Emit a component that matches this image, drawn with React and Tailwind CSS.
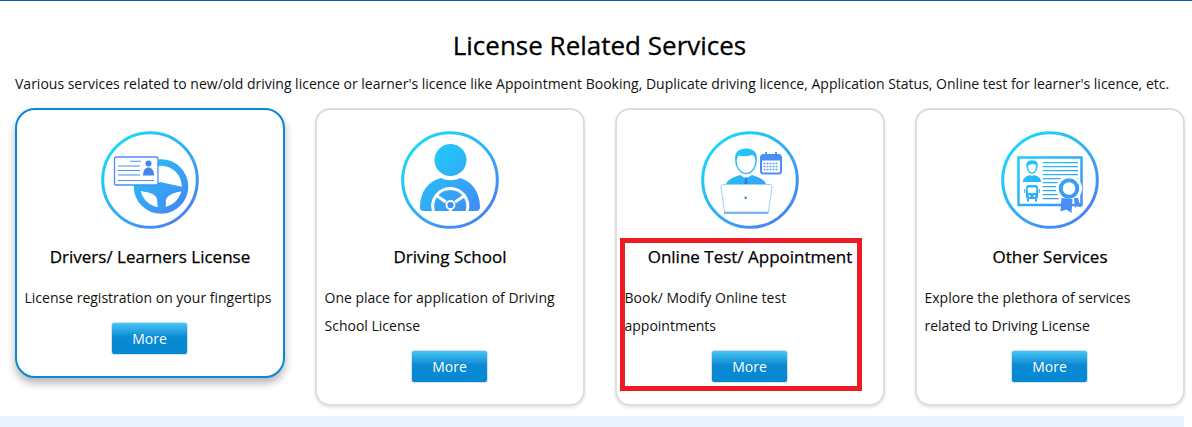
import React from 'react';

// circle + gradient shared by all four service icons
function IconRing({ id, children }) {
  return (
    <svg width="98" height="98" viewBox="0 0 98 98" className="block">
      <defs>
        <linearGradient id={id} gradientUnits="userSpaceOnUse" x1="14" y1="8" x2="86" y2="90">
          <stop offset="0" stopColor="#16dcf8" />
          <stop offset="1" stopColor="#4a7ff5" />
        </linearGradient>
      </defs>
      <circle cx="49" cy="49" r="47.3" fill="none" stroke={`url(#${id})`} strokeWidth="3" />
      {children(`url(#${id})`)}
    </svg>
  );
}

function LicenseIcon() {
  return (
    <IconRing id="g1">
      {(g) => (
        <>
          <circle cx="60" cy="55.500" r="24" fill="none" stroke={g} strokeWidth="6.500" />
          <path d="M37 54 H52 L59 51 L82 56 L82 60 Q68 62 65 68 L64.500 80 H57 L56 68 Q54 61 37 60 Z" fill={g} />
          <rect x="13.500" y="26" width="43.500" height="28" rx="2" fill="#fff" stroke="#4a8df5" strokeWidth="1.300" />
          <path d="M29 30.300h11M17 35h22M17 39.500h22M17 44h22M17 49.500h36" fill="none" stroke="#4a8df5" strokeWidth="1.100" />
          <circle cx="47.500" cy="32.500" r="3" fill="#3f86ee" />
          <path d="M42 44.500 c0-6 3-8 5.500-8 s5.500 2 5.500 8z" fill="#3f86ee" />
        </>
      )}
    </IconRing>
  );
}

function SchoolIcon() {
  return (
    <IconRing id="g2">
      {(g) => (
        <>
          <circle cx="49.500" cy="29" r="16" fill={g} />
          <path d="M19 76 C19 60 28 50 40 47 C45 50 54 50 59 47 C70 50 79 60 79 76 C79 79 77 80 75 80 H23 C20 80 19 79 19 76 Z" fill={g} />
          <path d="M32.500 80 A17.500 17.500 0 1 1 66 80" fill="none" stroke="#fff" strokeWidth="3" />
          <path d="M36 65 L45 71 M63 65 L54 71 M49.500 78 V82" fill="none" stroke="#fff" strokeWidth="3" />
          <path d="M30 81 H69 V84 H30 Z" fill="#fff" />
          <circle cx="49.500" cy="74" r="4" fill="#3f8ef2" stroke="#fff" strokeWidth="1.800" />
        </>
      )}
    </IconRing>
  );
}

function OnlineIcon() {
  return (
    <IconRing id="g3">
      {(g) => (
        <>
          <path d="M25 53 C27 48 33 46 39 44 L44 47 L46 47 L51 44 C57 46 63 48 65 53 Z" fill={g} />
          <path d="M43.300 46.500 H46.700 L46 48.500 L47 53 H43 L44 48.500 Z" fill="#2f7fe0" />
          <path d="M35 30 C35 37 40 42.500 45 42.500 C50 42.500 55 37 55 30 C55 23 51 21 45 21 C39 21 35 23 35 30 Z" fill="#fff" stroke={g} strokeWidth="1.300" />
          <path d="M34.500 31 C32.500 21 38 17.500 45 17.500 C52 17.500 57.500 21 55.500 31 C54.500 26 53 24.500 51 24 C46 25.500 41 25.500 38 24.500 C36 26 35.500 28 34.500 31 Z" fill={g} />
          <rect x="60" y="24" width="20" height="18.500" rx="2.500" fill="#fff" stroke="#4a8df5" strokeWidth="2" />
          <rect x="60" y="24" width="20" height="5.500" rx="1.500" fill="#4a8df5" />
          <path d="M65 21v5M75 21v5" fill="none" stroke="#4a8df5" strokeWidth="1.800" />
          <path d="M62.500 32.500h15M62.500 35.500h15M62.500 38.500h15" fill="none" stroke="#6a9ff5" strokeWidth="1.500" strokeDasharray="2 1" />
          <path d="M22 53.500 H69 C70.500 53.500 71.200 54.500 71 56 L67.500 81 H23.500 L20 56 C19.800 54.500 20.500 53.500 22 53.500 Z" fill="#fff" stroke="#8ecdf6" strokeWidth="0.900" />
          <circle cx="44.700" cy="66.700" r="1.300" fill="#2f8eec" />
          <path d="M23 82 H67.500" fill="none" stroke="#5d9ef4" strokeWidth="1.300" />
        </>
      )}
    </IconRing>
  );
}

function OtherIcon() {
  return (
    <IconRing id="g4">
      {(g) => (
        <>
          <path d="M17.500 26.500 H80.500 V74 H17.500 Z" fill="none" stroke={g} strokeWidth="2.500" />
          <path d="M41.700 31.700h35.300M41.700 35.700h35.300M41.700 39.700h35.300M41.700 43.700h35.300M41.700 47.700h35.300M41.700 51.700h24M41.700 55.700h16M41.700 59.700h16M41.700 63.700h16M41.700 67.700h16" fill="none" stroke={g} strokeWidth="1.200" />
          <path d="M26.500 37 C25 32 27 30 31 30 C35 30 37 32 35.500 37 C35 40 33.500 42 31 42 C28.500 42 27 40 26.500 37 Z" fill="#fff" stroke={g} strokeWidth="1.500" />
          <path d="M26 36 C24.500 31.500 27 30 31 30 C35 30 37.500 31.500 36 36 C35 33 32 32.500 30 33.500 C28 34 27 34 26 36 Z" fill={g} />
          <path d="M22 51 C22 47 25 45 29 44 C30 45.500 32 45.500 33 44 C37 45 40 47 40 51 Z" fill={g} />
          <rect x="25" y="54" width="12" height="14" rx="2.500" fill={g} />
          <path d="M26.800 56.500h8.400v5.500h-8.400Z" fill="#fff" />
          <path d="M27 68v2.500M35 68v2.500" fill="none" stroke={g} strokeWidth="2" />
          <path d="M23.800 58v4M38.200 58v4" fill="none" stroke={g} strokeWidth="1.200" />
          <circle cx="28.500" cy="65" r="1" fill="#fff" />
          <circle cx="33.500" cy="65" r="1" fill="#fff" />
          <circle cx="68" cy="57.500" r="13" fill="#fff" />
          <path d="M60.500 67 L71.500 68 L70.500 82 L65.500 78.500 L59.500 80.500 Z" fill="#4a8df5" />
          <path d="M73 67 L77 67 L80 76.500 L76 75 L74 77 Z" fill="#4a8df5" />
          <circle cx="68" cy="57.500" r="8.300" fill="#fff" stroke={g} strokeWidth="4" />
        </>
      )}
    </IconRing>
  );
}

const services = [
  { title: 'Drivers/ Learners License', text: 'License registration on your fingertips', Icon: LicenseIcon, active: true },
  { title: 'Driving School', text: 'One place for application of Driving School License', Icon: SchoolIcon },
  { title: 'Online Test/ Appointment', text: 'Book/ Modify Online test appointments', Icon: OnlineIcon },
  { title: 'Other Services', text: 'Explore the plethora of services related to Driving License', Icon: OtherIcon },
];

function ServiceCard({ title, text, Icon, active }) {
  return (
    <div
      className={
        active
          ? 'w-[270px] h-[270px] shrink-0 rounded-[20px] border-2 border-[#0a8ad3] bg-white px-[7.5px] pt-[21px] shadow-[0_5px_8px_rgba(0,0,0,0.3)]'
          : 'w-[270px] h-[298px] shrink-0 rounded-[15px] border-2 border-[#dddddd] bg-white px-[7.5px] pt-[21px] shadow-[0_2px_3px_rgba(0,0,0,0.1)]'
      }
    >
      <div className="flex justify-center">
        <Icon />
      </div>
      <h3 className="mt-[16px] text-center text-[17px] leading-[24px] font-medium text-black [-webkit-text-stroke:0.25px_black]">{title}</h3>
      <p className="mt-[15px] text-[14px] leading-[28px] text-[#111]">{text}</p>
      <div className="mt-[10px] flex justify-center pr-px">
        <button className="h-[33px] w-[77px] rounded-[3px] border border-[#cfe3ef] bg-gradient-to-b from-[#45c6f5] via-[#0a8ad3] via-45% to-[#0587d2] text-[14px] text-white">
          More
        </button>
      </div>
    </div>
  );
}

export default function App() {
  return (
    <div className="relative h-[427px] w-[1192px] overflow-hidden bg-white font-['Open_Sans',sans-serif]">
      <div className="h-px bg-[#0b57b0]" />
      <h2 className="mt-[26px] pl-[7px] text-center text-[26px] leading-[36px] font-medium text-black [-webkit-text-stroke:0.3px_black]">License Related Services</h2>
      <p className="mt-[9px] pl-[15px] text-[14px] leading-[24px] whitespace-nowrap text-[#111]">
        Various services related to new/old driving licence or learner's licence like Appointment Booking, Duplicate driving licence, Application Status, Online test for learner's licence, etc.
      </p>
      <div className="mt-[12px] flex gap-[30px] pl-[15px]">
        {services.map((s) => (
          <ServiceCard key={s.title} {...s} />
        ))}
      </div>
      <div className="absolute left-0 top-[416px] h-[11px] w-[1184px] bg-[#e9f3fd]" />
      <div className="absolute left-[620px] top-[238px] h-[153px] w-[242px] border-[5px] border-[#ed1c24]" />
    </div>
  );
}
